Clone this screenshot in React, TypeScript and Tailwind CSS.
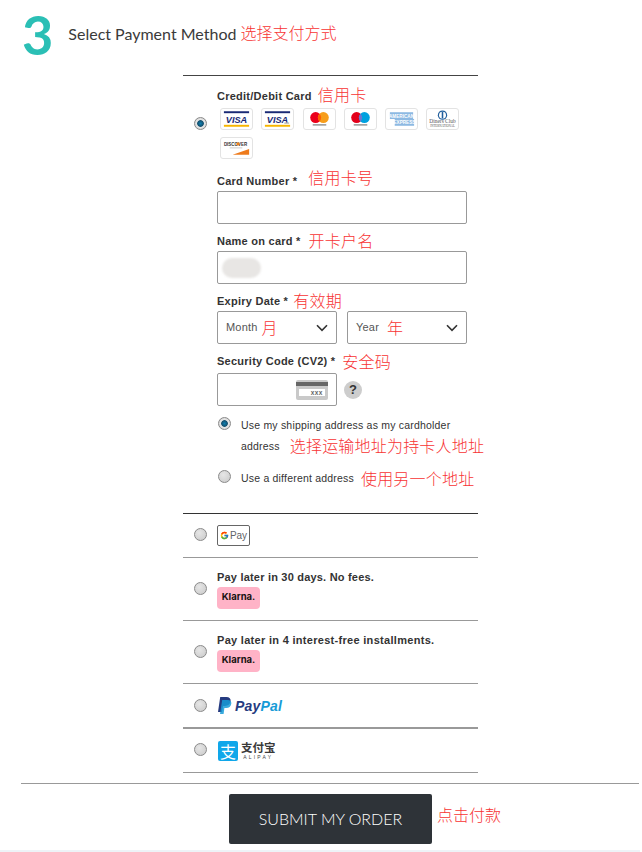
import type { ReactNode } from "react";
import { FcGoogle } from "react-icons/fc";

const arial = "font-['Liberation_Sans',Arial,sans-serif]";

function Note({ children, className = "" }: { children: ReactNode; className?: string }) {
  return (
    <span className={`font-['Noto_Sans_CJK_SC',sans-serif] text-[16px] font-light leading-none whitespace-nowrap text-[#f73333] ${className}`}>
      {children}
    </span>
  );
}

function Radio({ checked = false, className = "" }: { checked?: boolean; className?: string }) {
  return (
    <span
      className={`block h-[13px] w-[13px] shrink-0 rounded-full border border-[#8a8a8a] ${
        checked
          ? "bg-[radial-gradient(circle,#0f7fb0_0%,#14506e_38%,#e8e8e8_48%,#c8c8c8_100%)]"
          : "bg-[radial-gradient(circle_at_40%_35%,#e6e6e6_0%,#c9c9c9_100%)]"
      } ${className}`}
    />
  );
}

function Field({ label, note, noteClass, bodyClass = "mt-[2px]", children }: { label: string; note: string; noteClass: string; bodyClass?: string; children: ReactNode }) {
  return (
    <div className="mt-[9px]">
      <div className="flex h-[16px] items-center whitespace-nowrap text-[11px] font-bold tracking-[0.25px] text-[#333]">
        {label} *
        <Note className={noteClass}>{note}</Note>
      </div>
      <div className={bodyClass}>{children}</div>
    </div>
  );
}

function Chevron() {
  return (
    <svg width="12" height="8" viewBox="0 0 12 8" className="ml-auto">
      <path d="M1 1.2 6 6.4l5-5.2" fill="none" stroke="#333" strokeWidth="1.6" />
    </svg>
  );
}

function SelectBox({ label, note }: { label: string; note: string }) {
  return (
    <div className="flex h-[33px] w-[120px] items-center rounded-[2px] border border-[#999] pl-[8px] pr-[8px] text-[11px] tracking-[0.2px] text-[#555]">
      {label}
      <Note className={label === "Month" ? "ml-[4px] -mt-[2px]" : "ml-[8px] -mt-[2px]"}>{note}</Note>
      <Chevron />
    </div>
  );
}

function CardFrame({ children }: { children: ReactNode }) {
  return (
    <div className="h-[22px] w-[33px] overflow-hidden rounded-[3px] border border-[#e3e3e3] bg-white">
      <svg width="31" height="20" viewBox="0 0 32 20">
        {children}
      </svg>
    </div>
  );
}

function VisaCard({ small = false }: { small?: boolean }) {
  return (
    <CardFrame>
      <rect x="3" y="2" width="26" height="2" fill="#1a2a75" />
      <rect x="3" y="16" width="26" height="2" fill="#f8b600" />
      <text x="16" y="14" textAnchor="middle" fontFamily="Liberation Sans" fontWeight="700" fontStyle="italic" fontSize="9.5" fill="#1a2a75">
        VISA
      </text>
      {small && <rect x="23" y="13.5" width="5" height="1.5" fill="#bbb" />}
    </CardFrame>
  );
}

function CircleCard({ left, right, mid }: { left: string; right: string; mid: string }) {
  return (
    <CardFrame>
      <circle cx="12" cy="8.5" r="5.6" fill={left} />
      <circle cx="20" cy="8.5" r="5.6" fill={right} />
      <path d="M16 4.5a5.6 5.6 0 0 1 0 8 5.6 5.6 0 0 1 0-8z" fill={mid} />
      <rect x="9" y="15.5" width="14" height="1.2" fill="#777" />
    </CardFrame>
  );
}

function AmexCard() {
  return (
    <CardFrame>
      <rect x="4" y="3" width="24" height="7" fill="#8db9e2" />
      <rect x="9" y="10" width="20" height="7" fill="#8db9e2" />
      <text x="16" y="8.5" textAnchor="middle" fontFamily="Liberation Sans" fontWeight="700" fontSize="4.8" fill="#fff">AMERICAN</text>
      <text x="19" y="15.5" textAnchor="middle" fontFamily="Liberation Sans" fontWeight="700" fontSize="4.8" fill="#fff">EXPRESS</text>
    </CardFrame>
  );
}

function DinersCard() {
  return (
    <CardFrame>
      <circle cx="16" cy="6" r="4.8" fill="#1f5d9c" />
      <circle cx="16" cy="6" r="3.6" fill="#fff" />
      <rect x="15.2" y="2.8" width="1.6" height="6.4" fill="#1f5d9c" />
      <text x="16" y="14.4" textAnchor="middle" fontFamily="Liberation Serif" fontSize="5.6" fill="#555">Diners Club</text>
      <text x="16" y="18" textAnchor="middle" fontFamily="Liberation Serif" fontSize="3.2" fill="#555">INTERNATIONAL</text>
    </CardFrame>
  );
}

function DiscoverCard() {
  return (
    <CardFrame>
      <text x="3" y="7.5" fontFamily="Liberation Sans" fontWeight="700" fontSize="4.6" fill="#333">DISCOVER</text>
      <circle cx="17.6" cy="5.8" r="1.7" fill="#f0801a" />
      <rect x="9" y="9.5" width="13" height="0.8" fill="#bbb" />
      <path d="M12 17 29 11v6z" fill="#ee7b1c" />
    </CardFrame>
  );
}

function KlarnaBadge() {
  return (
    <div className="mt-[1px] flex h-[22px] w-[43px] items-center justify-center rounded-[4px] bg-[#ffb3c7] font-['Inter',sans-serif] text-[9.5px] font-bold text-[#17120f]">
      Klarna.
    </div>
  );
}

function PayRow({ children, className = "", radioClass = "-mt-[2px]" }: { children: ReactNode; className?: string; radioClass?: string }) {
  return (
    <div className={`flex items-center ${className}`}>
      <div className={`flex w-[34px] justify-center ${radioClass}`}>
        <Radio />
      </div>
      <div>{children}</div>
    </div>
  );
}

export default function App() {
  return (
    <div className={`min-h-[852px] w-[642px] overflow-hidden bg-white ${arial}`}>
      {/* heading */}
      <div className="flex h-[75px] items-start pl-[22px]">
        <div className="font-['Lato',sans-serif] text-[54px] font-bold leading-[70px] text-[#2bbfb5]">3</div>
        <div className="ml-[15px] mt-[25px] flex h-[18px] items-center whitespace-nowrap font-['Lato',sans-serif] text-[16px] text-[#3a3a3a]">
          Select Payment Method
          <Note className="ml-[4px] -mt-[4px]">选择支付方式</Note>
        </div>
      </div>

      <div className="ml-[183px] w-[295px]">
        {/* card section */}
        <div className="flex h-[439px] border-y border-t-[#444] border-b-[#333]">
          <div className="flex w-[34px] justify-center pt-[41px]">
            <Radio checked />
          </div>
          <div className="w-[250px] pt-[12px]">
            <div className="flex h-[16px] items-center whitespace-nowrap text-[11px] font-bold tracking-[0.25px] text-[#333]">
              Credit/Debit Card
              <Note className="ml-[6px] -mt-[5px]">信用卡</Note>
            </div>
            <div className="mt-[4px] ml-[3px] flex w-[245px] flex-wrap gap-x-[8.25px] gap-y-[7px]">
              <VisaCard />
              <VisaCard small />
              <CircleCard left="#eb001b" right="#f79e1b" mid="#ff5f00" />
              <CircleCard left="#e3001b" right="#00a1df" mid="#7375cf" />
              <AmexCard />
              <DinersCard />
              <DiscoverCard />
            </div>

            <div className="pt-[5px]">
              <Field label="Card Number" note="信用卡号" noteClass="ml-[11px] -mt-[8px]">
                <div className="h-[33px] rounded-[2px] border border-[#999]" />
              </Field>
              <Field label="Name on card" note="开卡户名" noteClass="ml-[8px] -mt-[3px]">
                <div className="flex h-[33px] items-center rounded-[2px] border border-[#999] pl-[4px]">
                  <div className="h-[20px] w-[39px] rounded-full bg-[#e8e6e4] blur-[1px]" />
                </div>
              </Field>
              <Field label="Expiry Date" note="有效期" noteClass="ml-[5px] -mt-[2px]">
                <div className="flex gap-[10px]">
                  <SelectBox label="Month" note="月" />
                  <SelectBox label="Year" note="年" />
                </div>
              </Field>
              <Field label="Security Code (CV2)" note="安全码" noteClass="ml-[7px]" bodyClass="mt-[4px]">
                <div className="flex items-center">
                  <div className="flex h-[33px] w-[120px] items-center justify-end rounded-[2px] border border-[#999] pr-[8px]">
                    <svg width="32" height="20" viewBox="0 0 32 20">
                      <rect width="32" height="20" rx="2" fill="#c9c9c9" />
                      <rect y="2" width="32" height="4" fill="#666" />
                      <rect x="3" y="9" width="26" height="7" fill="#fff" />
                      <text x="27" y="15" textAnchor="end" fontFamily="Liberation Sans" fontSize="6.5" fontWeight="700" letterSpacing="0.5" fill="#666">
                        xxx
                      </text>
                    </svg>
                  </div>
                  <div className="ml-[7px] flex h-[18px] w-[18px] items-center justify-center rounded-full bg-[#cdcdcd] text-[13px] font-bold leading-none text-[#333]">
                    ?
                  </div>
                </div>
              </Field>
            </div>

            {/* billing address */}
            <div className="mt-[9px] flex items-start whitespace-nowrap text-[10.5px] leading-[20px] tracking-[0.2px] text-[#333]">
              <Radio checked className="mt-[2px] ml-[1px]" />
              <div className="ml-[10px]">
                Use my shipping address as my cardholder
                <br />
                address
                <Note className="relative top-[2px] ml-[10px]">选择运输地址为持卡人地址</Note>
              </div>
            </div>
            <div className="mt-[12px] flex items-start whitespace-nowrap text-[10.5px] leading-[20px] tracking-[0.2px] text-[#333]">
              <Radio className="mt-[2px] ml-[1px]" />
              <div className="ml-[10px] flex items-center">
                Use a different address
                <Note className="ml-[7px]">使用另一个地址</Note>
              </div>
            </div>
          </div>
        </div>

        {/* other payment methods */}
        <PayRow className="h-[44px] border-b border-[#999]">
          <div className="flex h-[21px] w-[33px] items-center justify-center gap-[1px] rounded-[2px] border border-[#666] text-[10px] text-[#5f6368]">
            <FcGoogle size={9} />
            Pay
          </div>
        </PayRow>
        <PayRow className="h-[63px] border-b border-[#999]">
          <div className="flex h-[16px] items-center text-[11px] font-bold tracking-[0.2px] text-[#333]">Pay later in 30 days. No fees.</div>
          <KlarnaBadge />
        </PayRow>
        <PayRow className="h-[63px] border-b border-[#999]">
          <div className="flex h-[16px] items-center text-[11px] font-bold tracking-[0.3px] text-[#333]">Pay later in 4 interest-free installments.</div>
          <KlarnaBadge />
        </PayRow>
        <PayRow className="h-[45px] border-b-2 border-[#999]" radioClass="">
          <div className="flex items-center">
            <svg width="15" height="17" viewBox="0 0 15 17">
              <path d="M3.2 0h6.2c3 0 4.6 1.7 4.2 4.3-.5 3-2.6 4.6-5.6 4.6H6L5 15H1z" fill="#253b80" />
              <path d="M5.2 3h5.4c2.6 0 4 1.5 3.7 3.8-.4 2.7-2.4 4.3-5 4.3H7.4L6.6 17H3z" fill="#179bd7" opacity="0.85" />
            </svg>
            <span className="ml-[3px] text-[14px] font-bold italic leading-none tracking-[0.2px] text-[#253b80]">
              Pay<span className="text-[#179bd7]">Pal</span>
            </span>
          </div>
        </PayRow>
        <PayRow className="h-[44px] border-b border-[#999]">
          <div className="ml-[1px] flex items-center">
            <div className="flex h-[20px] w-[20px] items-center justify-center rounded-[2px] bg-[#10a7ea] font-['Noto_Sans_CJK_SC',sans-serif] text-[16px] leading-none text-white">
              支
            </div>
            <div className="ml-[3px] flex flex-col items-center">
              <span className="font-['Noto_Sans_CJK_SC',sans-serif] text-[11.5px] font-bold leading-[13px] text-[#3a3a3a]">支付宝</span>
              <span className="text-[5px] leading-[7px] tracking-[2.2px] text-[#444]">ALIPAY</span>
            </div>
          </div>
        </PayRow>
      </div>

      {/* submit */}
      <div className="ml-[21px] mt-[10px] w-[618px] border-t border-[#999]" />
      <div className="ml-[229px] mt-[10px] flex items-center">
        <div className="flex h-[50px] w-[203px] items-center justify-center rounded-[2px] bg-[#2e3338] font-['Lato',sans-serif] text-[16px] font-light text-white">
          SUBMIT MY ORDER
        </div>
        <Note className="ml-[5px] -mt-[11px] text-[16px]">点击付款</Note>
      </div>
      <div className="mt-[6px] h-[2px] w-[640px] bg-[#eef3f7]" />
    </div>
  );
}
